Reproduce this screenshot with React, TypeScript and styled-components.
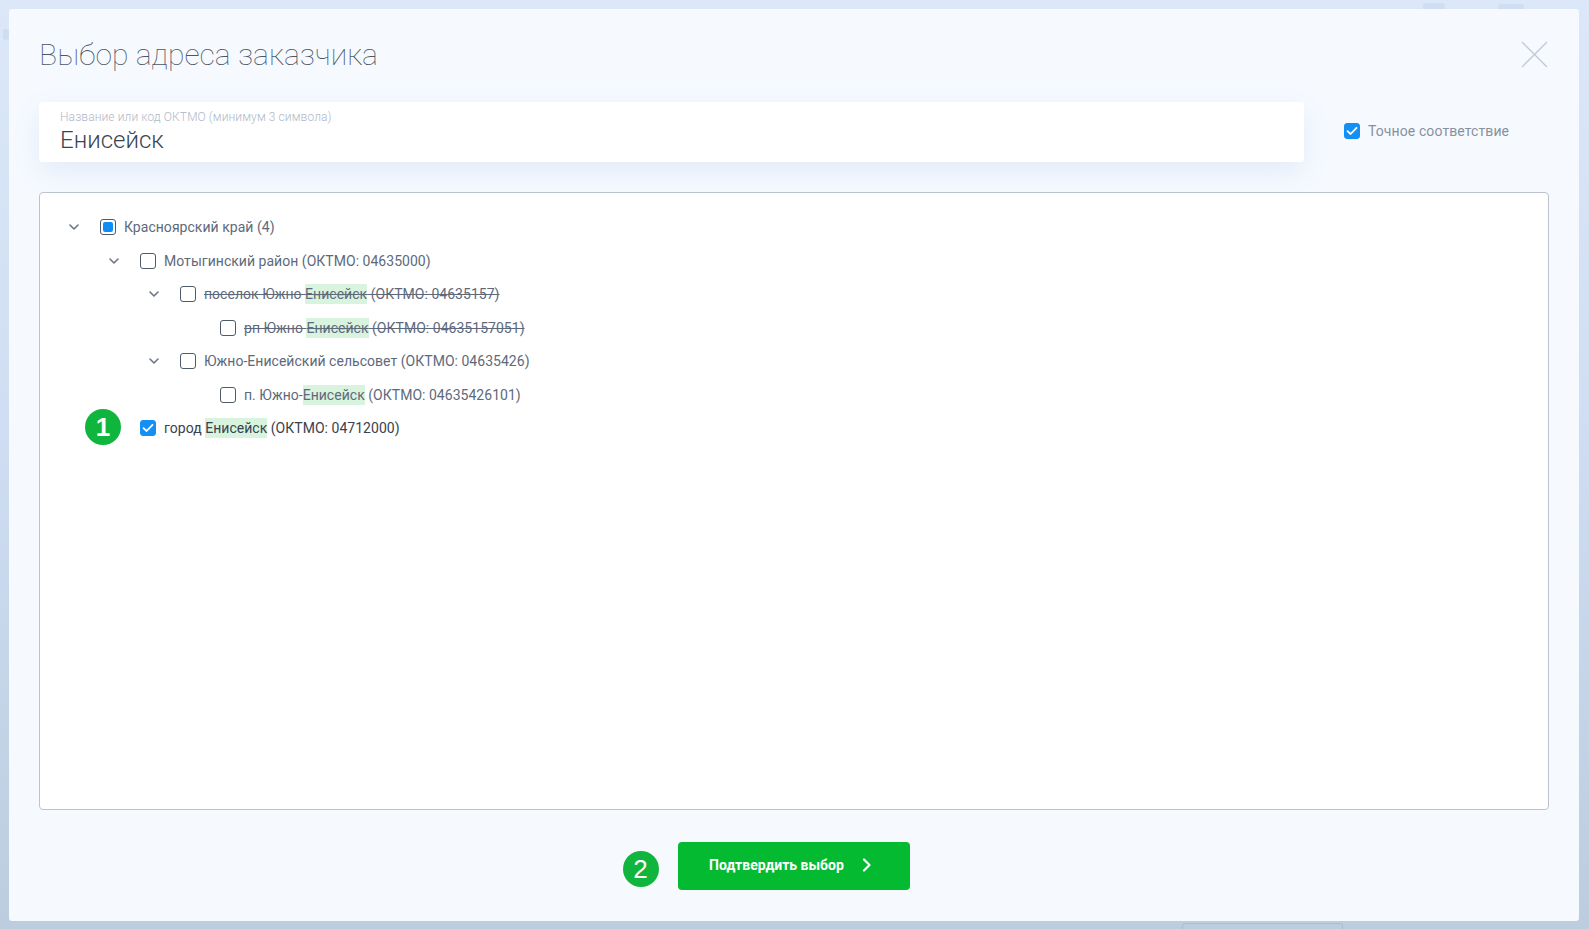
import React from "react";
import styled, { createGlobalStyle } from "styled-components";

const GlobalStyle = createGlobalStyle`
	html,
	body {
		height: 100%;
		margin: 0;
		overflow: hidden;
	}

	body {
		font-family: Roboto, "Liberation Sans", sans-serif;
	}
`;

const Page = styled("div")`
	background: linear-gradient(180deg, #dce8f9 0%, #cfdef2 45%, #bccde0 100%);
	box-sizing: border-box;
	height: 929px;
	padding: 9px 10px 8px 9px;
	position: relative;
	width: 1589px;
`;

const GhostShape = styled("div")<{ $left: number; $top: number; $width: number; $height: number; $outlined?: boolean }>`
	background: ${({ $outlined }) => ($outlined ? "none" : "rgba(130, 160, 200, 0.14)")};
	border: ${({ $outlined }) => ($outlined ? "1px solid rgba(120, 150, 190, 0.3)" : "0")};
	border-radius: 3px;
	box-sizing: border-box;
	height: ${({ $height }) => $height}px;
	left: ${({ $left }) => $left}px;
	position: absolute;
	top: ${({ $top }) => $top}px;
	width: ${({ $width }) => $width}px;
`;

const Modal = styled("div")`
	background: #f6faff;
	border-radius: 3px;
	box-sizing: border-box;
	display: flex;
	flex-direction: column;
	height: 912px;
	padding: 0 30px 31px 30px;
	position: relative;
`;

const Header = styled("header")`
	align-items: center;
	display: flex;
	height: 93px;
	justify-content: space-between;
	padding-right: 1px;
`;

const Title = styled("h1")`
	color: #4b5666;
	font-size: 30.1px;
	font-weight: 100;
	margin: 0;
	padding-bottom: 2px;
`;

const CloseButton = styled("button")`
	background: none;
	border: 0;
	cursor: pointer;
	display: block;
	height: 27px;
	margin: 0 0 2px;
	padding: 0;
	width: 27px;
`;

const SearchRow = styled("div")`
	align-items: center;
	display: flex;
	gap: 40px;
	margin-bottom: 30px;
`;

const SearchField = styled("label")`
	background: #fff;
	border-radius: 3px;
	box-shadow: 0 10px 28px rgba(70, 120, 190, 0.11);
	box-sizing: border-box;
	display: flex;
	flex: 0 0 1265px;
	flex-direction: column;
	height: 60px;
	padding: 8px 20px 0 21px;
`;

const SearchLabel = styled("span")`
	color: #b0b8c6;
	font-size: 12px;
	font-weight: 300;
	letter-spacing: 0.1px;
	line-height: 15px;
`;

const SearchInput = styled("input")`
	background: none;
	border: 0;
	color: #3a4352;
	font-family: inherit;
	font-size: 24px;
	font-weight: 300;
	height: 30px;
	outline: none;
	padding: 0;
`;

const ExactMatch = styled("label")`
	align-items: center;
	color: #8690a1;
	display: flex;
	font-size: 14px;
	gap: 8px;
	letter-spacing: 0.1px;
	margin-bottom: 2px;
`;

const Box = styled("span")<{ $state: "empty" | "partial" | "checked" }>`
	align-items: center;
	background: ${({ $state }) => ($state === "checked" ? "#1390f5" : "#fff")};
	border: 1px solid ${({ $state }) => ($state === "checked" ? "#1390f5" : "#4f5b6c")};
	border-radius: 3px;
	box-sizing: border-box;
	display: flex;
	flex: 0 0 16px;
	height: 16px;
	justify-content: center;
	width: 16px;

	&::after {
		background: #0e8df7;
		border-radius: 2px;
		content: "";
		display: ${({ $state }) => ($state === "partial" ? "block" : "none")};
		height: 10px;
		width: 10px;
	}
`;

const TreeBox = styled("div")`
	background: #fff;
	border: 1px solid #bcc3cf;
	border-radius: 4px;
	box-sizing: border-box;
	flex: 0 0 618px;
	padding: 17.5px 24px;
`;

const Row = styled("div")<{ $level: number }>`
	align-items: center;
	display: flex;
	height: 33.5px;
	padding-left: ${({ $level }) => $level * 40}px;
	position: relative;
`;

const Toggle = styled("span")`
	align-items: center;
	display: flex;
	flex: 0 0 20px;
	height: 20px;
	justify-content: center;
	margin-right: 16px;
`;

const Label = styled("span")<{ $selected?: boolean; $removed?: boolean }>`
	color: ${({ $selected }) => ($selected ? "#39424f" : "#5e6a7b")};
	font-size: 14px;
	letter-spacing: 0.03px;
	margin-left: 8px;
	text-decoration: ${({ $removed }) => ($removed ? "line-through" : "none")};
	white-space: nowrap;
`;

const Match = styled("mark")`
	background: #d8f3de;
	color: inherit;
	padding: 2px 0;
`;

const StepBadge = styled("span")<{ $left: number }>`
	align-items: center;
	background: #0fb53c;
	border-radius: 50%;
	color: #fff;
	display: flex;
	font-family: "Liberation Sans", sans-serif;
	font-size: 26px;
	font-weight: 700;
	height: 36px;
	justify-content: center;
	left: ${({ $left }) => $left}px;
	position: absolute;
	top: calc(50% - 1px);
	transform: translateY(-50%);
	width: 36px;
`;

const Footer = styled("footer")`
	display: flex;
	justify-content: center;
	margin-top: 32px;
	padding-right: 1px;
`;

const ConfirmButton = styled("button")`
	align-items: center;
	background: #04ba31;
	border: 0;
	border-radius: 4px;
	color: #fff;
	cursor: pointer;
	display: flex;
	font-family: inherit;
	font-size: 14px;
	font-weight: 700;
	gap: 18px;
	height: 48px;
	justify-content: center;
	padding: 0 6px 2px 0;
	position: relative;
	width: 232px;
`;

const FooterBadge = styled(StepBadge)`
	font-weight: 400;
	top: calc(50% + 3px);
`;

const Chevron = () => (
	<svg width="12" height="8" viewBox="0 0 12 8" fill="none">
		<path d="M2 2l4 4 4-4" stroke="#6a7586" strokeWidth="1.6" strokeLinecap="round" strokeLinejoin="round" />
	</svg>
);

const Tick = () => (
	<svg width="12" height="10" viewBox="0 0 12 10" fill="none">
		<path d="M1.5 5.2 4.6 8l5.9-6.2" stroke="#fff" strokeWidth="1.8" strokeLinecap="round" strokeLinejoin="round" />
	</svg>
);

const CheckBox = ({ state }: { state: "empty" | "partial" | "checked" }) => (
	<Box $state={state}>{state === "checked" && <Tick />}</Box>
);

interface TreeItem {
	level: number;
	before: string;
	match?: string;
	after?: string;
	state?: "empty" | "partial" | "checked";
	expandable?: boolean;
	removed?: boolean;
}

const items: Array<TreeItem> = [
	{ level: 0, before: "Красноярский край (4)", state: "partial", expandable: true },
	{ level: 1, before: "Мотыгинский район (ОКТМО: 04635000)", expandable: true },
	{
		level: 2,
		before: "поселок Южно ",
		match: "Енисейск",
		after: " (ОКТМО: 04635157)",
		expandable: true,
		removed: true,
	},
	{ level: 3, before: "рп Южно ", match: "Енисейск", after: " (ОКТМО: 04635157051)", removed: true },
	{ level: 2, before: "Южно-Енисейский сельсовет (ОКТМО: 04635426)", expandable: true },
	{ level: 3, before: "п. Южно-", match: "Енисейск", after: " (ОКТМО: 04635426101)" },
	{ level: 1, before: "город ", match: "Енисейск", after: " (ОКТМО: 04712000)", state: "checked" },
];

export default function App(): React.ReactElement {
	return (
		<>
			<GlobalStyle />
			<Page>
				<GhostShape $left={1423} $top={3} $width={22} $height={12} />
				<GhostShape $left={1498} $top={4} $width={26} $height={12} />
				<GhostShape $left={3} $top={29} $width={6} $height={11} />
				<GhostShape $left={1182} $top={923} $width={161} $height={12} $outlined />
				<Modal>
					<Header>
						<Title>Выбор адреса заказчика</Title>
						<CloseButton aria-label="Закрыть">
							<svg width="27" height="27" viewBox="0 0 27 27" fill="none">
								<path d="M1 1l25 25M26 1 1 26" stroke="#c3cad6" strokeWidth="1.4" />
							</svg>
						</CloseButton>
					</Header>

					<SearchRow>
						<SearchField>
							<SearchLabel>Название или код ОКТМО (минимум 3 символа)</SearchLabel>
							<SearchInput readOnly value="Енисейск" />
						</SearchField>
						<ExactMatch>
							<CheckBox state="checked" />
							Точное соответствие
						</ExactMatch>
					</SearchRow>

					<TreeBox>
						{items.map(item => (
							<Row $level={item.level} key={item.before + item.after}>
								{item.state === "checked" && <StepBadge $left={21}>1</StepBadge>}
								<Toggle>{item.expandable && <Chevron />}</Toggle>
								<CheckBox state={item.state ?? "empty"} />
								<Label $selected={item.state === "checked"} $removed={item.removed}>
									{item.before}
									{item.match && <Match>{item.match}</Match>}
									{item.after}
								</Label>
							</Row>
						))}
					</TreeBox>

					<Footer>
						<ConfirmButton>
							<FooterBadge $left={-55}>2</FooterBadge>
							Подтвердить выбор
							<svg width="10" height="14" viewBox="0 0 10 14" fill="none">
								<path d="M2 1.5 7.5 7 2 12.5" stroke="#fff" strokeWidth="2.2" strokeLinecap="round" strokeLinejoin="round" />
							</svg>
						</ConfirmButton>
					</Footer>
				</Modal>
			</Page>
		</>
	);
}
